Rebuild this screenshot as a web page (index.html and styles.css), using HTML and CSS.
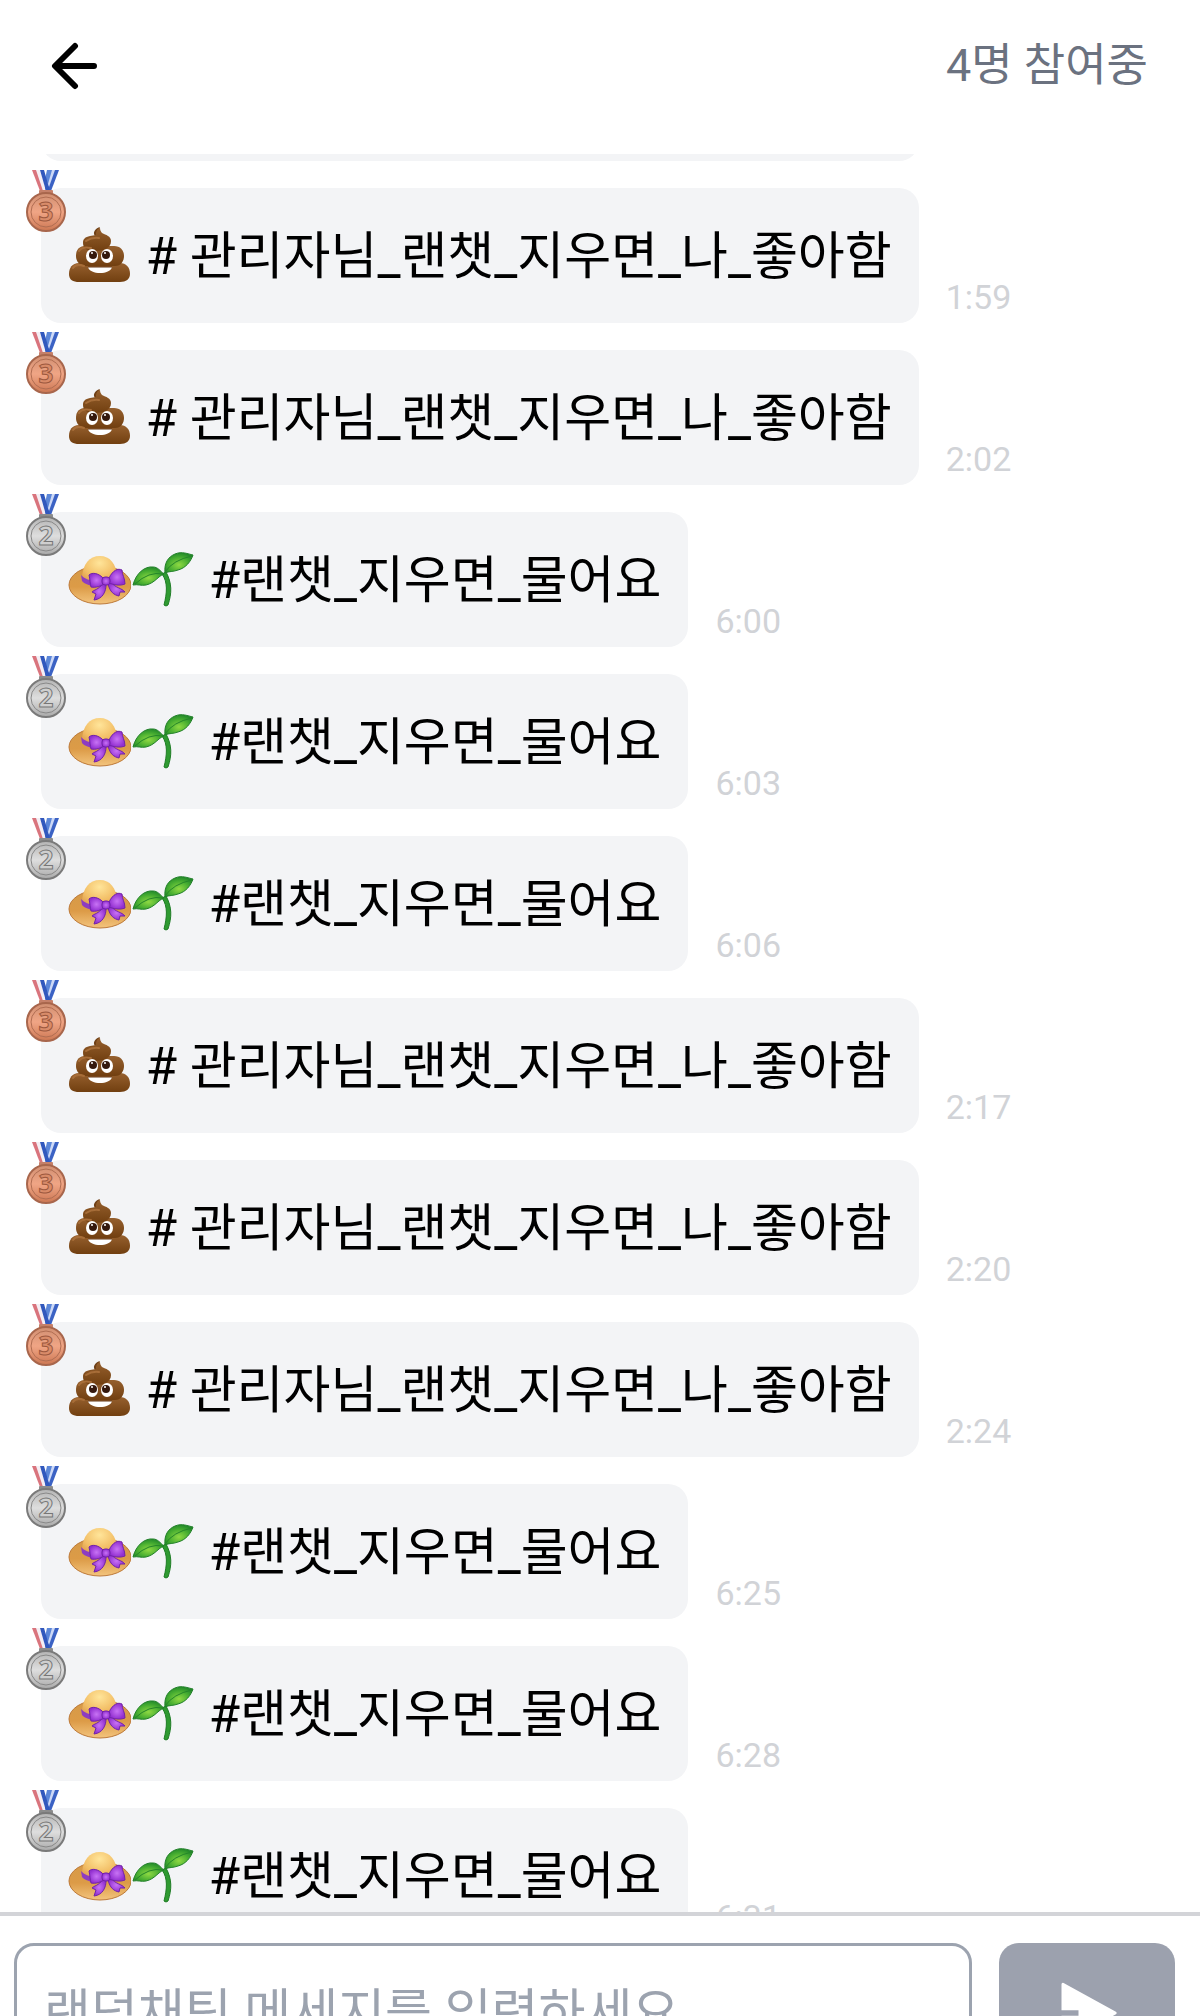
FILE: index.html
```html
<!DOCTYPE html>
<html lang="ko">
<head>
<meta charset="utf-8">
<meta name="viewport" content="width=device-width, initial-scale=1">
<title>랜덤채팅</title>
<link rel="stylesheet" href="styles.css">
</head>
<body>
<svg class="sprite" aria-hidden="true">
  <defs>
    <linearGradient id="bronze" x1="0" y1="0" x2="0" y2="1"><stop offset="0" stop-color="#d08f72"/><stop offset=".5" stop-color="#f0a585"/><stop offset="1" stop-color="#cc7753"/></linearGradient>
    <linearGradient id="silver" x1="0" y1="0" x2="0" y2="1"><stop offset="0" stop-color="#b4b4b4"/><stop offset=".5" stop-color="#dedede"/><stop offset="1" stop-color="#a9a9a9"/></linearGradient>
    <linearGradient id="brown" x1="0" y1="0" x2="0" y2="1"><stop offset="0" stop-color="#96602e"/><stop offset="1" stop-color="#713f10"/></linearGradient>
    <radialGradient id="straw" cx=".5" cy=".25" r=".8"><stop offset="0" stop-color="#ffe59a"/><stop offset=".6" stop-color="#f2bd64"/><stop offset="1" stop-color="#d8934a"/></radialGradient>
    <linearGradient id="brim" x1="0" y1="0" x2="0" y2="1"><stop offset="0" stop-color="#d59a48"/><stop offset=".55" stop-color="#dc9b47"/><stop offset="1" stop-color="#f3c47d"/></linearGradient>
    <radialGradient id="leaf" cx=".5" cy=".6" r=".6"><stop offset="0" stop-color="#8ed943"/><stop offset=".6" stop-color="#48ae31"/><stop offset="1" stop-color="#238a2a"/></radialGradient>
    <radialGradient id="bow"><stop offset="0" stop-color="#c873f5"/><stop offset="1" stop-color="#922fd0"/></radialGradient>
  </defs>
  <symbol id="ribbon" viewBox="0 0 40 63">
    <path d="M33 0L25 21H18L25 0Z" fill="#3b62c4"/>
    <path d="M29 0L23 17 20 13 25 0Z" fill="#cdd9f7"/>
    <path d="M26 0L22 14 19 9 21 0Z" fill="#5b86d8"/>
    <path d="M6 0L14 21H19L11 0Z" fill="#d9747d"/>
    <path d="M10 0L17 21H20L14 0Z" fill="#f4eef4"/>
    <path d="M14 0L20 21H24L18 0Z" fill="#3158bd"/>
  </symbol>
  <symbol id="medal-3" viewBox="0 0 40 63">
    <use href="#ribbon" width="40" height="63"/>
    <rect x="13" y="20" width="14" height="4" rx="1" fill="#c58069"/>
    <circle cx="20" cy="42" r="19" fill="url(#bronze)" stroke="#a8664c" stroke-width="2"/>
    <circle cx="20" cy="42" r="15" fill="none" stroke="#b06d52"/>
    <text class="medal-digit bronze" x="20" y="51">3</text>
  </symbol>
  <symbol id="medal-2" viewBox="0 0 40 63">
    <use href="#ribbon" width="40" height="63"/>
    <rect x="13" y="20" width="14" height="4" rx="1" fill="#8c8c8c"/>
    <circle cx="20" cy="42" r="19" fill="url(#silver)" stroke="#7a7a7a" stroke-width="2"/>
    <circle cx="20" cy="42" r="15" fill="none" stroke="#888"/>
    <text class="medal-digit silver" x="20" y="51">2</text>
  </symbol>
  <symbol id="poop" viewBox="0 0 63 63">
    <path d="M27 12C24 8 28 4 32 3C30 6 33 7 33 10Z" fill="#6f4017"/>
    <path d="M11 39C4 39 1 44 1 50C1 56 5 58 11 58H52C58 58 62 55 62 50C62 43 58 39 52 39Z" fill="url(#brown)"/>
    <path d="M16 22C9 23 8 28 8 32C8 38 12 42 18 42H47C53 42 56 37 56 32C56 26 52 22 46 22Z" fill="url(#brown)"/>
    <path d="M22 12C17 13 15 15 15 19C15 25 20 27 27 27C36 27 43 24 43 17C43 12 38 11 34 9C33 8 32 6 32 4C28 5 28 9 28 11Z" fill="url(#brown)"/>
    <path d="M11 27Q14 22 23 24M5 44Q8 39 16 42M18 17Q24 13 31 14" fill="none" stroke="#a76d38" stroke-width="2" stroke-linecap="round"/>
    <ellipse cx="24" cy="32" rx="6" ry="7" fill="#fff"/><ellipse cx="39" cy="32" rx="6" ry="7" fill="#fff"/>
    <circle cx="25" cy="31" r="4" fill="#35190d"/><circle cx="38" cy="31" r="4" fill="#35190d"/>
    <circle cx="24" cy="29" r="1" fill="#fff"/><circle cx="37" cy="29" r="1" fill="#fff"/>
    <path d="M20 43H44C42 51 22 51 20 43Z" fill="#fff"/><path d="M20 43H44" stroke="#633615" stroke-width="1"/>
  </symbol>
  <symbol id="hat" viewBox="0 0 63 63">
    <ellipse cx="32" cy="37" rx="31" ry="19" fill="url(#brim)" stroke="#bd7938"/>
    <path d="M14 29C15 16 21 8 32 8C42 8 48 16 49 27C43 39 19 39 14 29Z" fill="url(#straw)"/>
    <path d="M13 27C20 35 34 35 49 25V32C38 40 20 40 14 33Z" fill="#8e3cc1"/>
    <g fill="url(#bow)" stroke="#7123a8">
      <path d="M35 35C31 42 25 42 24 44L28 46 26 52C35 51 38 43 38 37Z"/>
      <path d="M40 36C42 44 46 47 51 48L52 44 57 44C54 40 47 40 43 34Z"/>
      <path d="M36 31C31 25 24 24 21 27C22 31 22 36 23 39C28 40 33 38 36 36Z"/>
      <path d="M41 30C45 22 50 20 54 22C54 27 57 30 57 36C52 38 46 37 41 35Z"/>
      <rect x="34" y="29" width="8" height="8" rx="3"/>
    </g>
  </symbol>
  <symbol id="sprout" viewBox="0 0 63 63">
    <path d="M31 26C37 34 36 45 33 57Q35 59 37 57C41 45 41 35 35 24Z" fill="#2f9a31" stroke="#1f7d26"/>
    <path d="M2 37C5 25 14 18 22 19C27 19 29 23 33 26C27 28 24 35 15 37C10 38 7 36 2 37Z" fill="url(#leaf)" stroke="#218029"/>
    <path d="M34 25C33 15 37 9 44 6C51 3 57 6 62 7C60 13 55 20 47 22C42 24 38 23 34 25Z" fill="url(#leaf)" stroke="#218029"/>
    <path d="M4 36Q18 23 32 26M34 24Q42 12 61 8" fill="none" stroke="#25862a"/>
  </symbol>
</svg>

<div class="app">
  <header class="topbar">
    <button class="back" type="button" aria-label="뒤로">
      <svg width="48" height="48" viewBox="0 0 48 48" fill="none" stroke="#000" stroke-width="6" stroke-linecap="round" stroke-linejoin="round"><path d="M25 4L5 24L25 44M6 24H44"/></svg>
    </button>
    <p class="members">4명 참여중</p>
  </header>

  <main class="chat">
    <ol class="messages">
      <li class="message"><div class="bubble"><svg class="medal"><use href="#medal-3"/></svg><svg class="emoji"><use href="#poop"/></svg><span class="text"> # 관리자님_랜챗_지우면_나_좋아함</span></div></li>
      <li class="message"><div class="bubble"><svg class="medal"><use href="#medal-3"/></svg><svg class="emoji"><use href="#poop"/></svg><span class="text"> # 관리자님_랜챗_지우면_나_좋아함</span></div><time>1:59</time></li>
      <li class="message"><div class="bubble"><svg class="medal"><use href="#medal-3"/></svg><svg class="emoji"><use href="#poop"/></svg><span class="text"> # 관리자님_랜챗_지우면_나_좋아함</span></div><time>2:02</time></li>
      <li class="message"><div class="bubble"><svg class="medal"><use href="#medal-2"/></svg><svg class="emoji"><use href="#hat"/></svg><svg class="emoji"><use href="#sprout"/></svg><span class="text"> #랜챗_지우면_물어요</span></div><time>6:00</time></li>
      <li class="message"><div class="bubble"><svg class="medal"><use href="#medal-2"/></svg><svg class="emoji"><use href="#hat"/></svg><svg class="emoji"><use href="#sprout"/></svg><span class="text"> #랜챗_지우면_물어요</span></div><time>6:03</time></li>
      <li class="message"><div class="bubble"><svg class="medal"><use href="#medal-2"/></svg><svg class="emoji"><use href="#hat"/></svg><svg class="emoji"><use href="#sprout"/></svg><span class="text"> #랜챗_지우면_물어요</span></div><time>6:06</time></li>
      <li class="message"><div class="bubble"><svg class="medal"><use href="#medal-3"/></svg><svg class="emoji"><use href="#poop"/></svg><span class="text"> # 관리자님_랜챗_지우면_나_좋아함</span></div><time>2:17</time></li>
      <li class="message"><div class="bubble"><svg class="medal"><use href="#medal-3"/></svg><svg class="emoji"><use href="#poop"/></svg><span class="text"> # 관리자님_랜챗_지우면_나_좋아함</span></div><time>2:20</time></li>
      <li class="message"><div class="bubble"><svg class="medal"><use href="#medal-3"/></svg><svg class="emoji"><use href="#poop"/></svg><span class="text"> # 관리자님_랜챗_지우면_나_좋아함</span></div><time>2:24</time></li>
      <li class="message"><div class="bubble"><svg class="medal"><use href="#medal-2"/></svg><svg class="emoji"><use href="#hat"/></svg><svg class="emoji"><use href="#sprout"/></svg><span class="text"> #랜챗_지우면_물어요</span></div><time>6:25</time></li>
      <li class="message"><div class="bubble"><svg class="medal"><use href="#medal-2"/></svg><svg class="emoji"><use href="#hat"/></svg><svg class="emoji"><use href="#sprout"/></svg><span class="text"> #랜챗_지우면_물어요</span></div><time>6:28</time></li>
      <li class="message"><div class="bubble"><svg class="medal"><use href="#medal-2"/></svg><svg class="emoji"><use href="#hat"/></svg><svg class="emoji"><use href="#sprout"/></svg><span class="text"> #랜챗_지우면_물어요</span></div><time>6:31</time></li>
    </ol>
  </main>

  <form class="composer">
    <input class="entry" type="text" aria-label="메세지" placeholder="랜덤채팅 메세지를 입력하세요">
    <button class="send" type="button" aria-label="보내기">
      <svg width="68" height="68" viewBox="0 0 24 24" fill="#fff"><path d="M3 13h6v-2H3V1.846a.5.5 0 0 1 .741-.438l18.462 10.154a.5.5 0 0 1 0 .876L3.741 22.592A.5.5 0 0 1 3 22.154V13z"/></svg>
    </button>
  </form>
</div>
</body>
</html>
```
FILE: styles.css
```css
* { box-sizing: border-box; }

body {
  margin: 0;
  background: #fff;
  color: #000;
  font-family: Roboto, "Noto Sans CJK KR", sans-serif;
}

.sprite { position: absolute; width: 0; height: 0; }

.app {
  display: flex;
  flex-direction: column;
  height: 100vh;
  overflow: hidden;
}

.topbar {
  flex: none;
  display: flex;
  align-items: center;
  justify-content: space-between;
  height: 132px;
  margin-bottom: 22px;
  padding: 0 52px 0 50px;
}

.back {
  display: flex;
  padding: 0;
  border: 0;
  background: none;
}

.members {
  margin: 0;
  color: #6b7280;
  font-size: 45px;
  line-height: 64px;
}

.chat {
  flex: 1;
  min-height: 0;
  overflow: hidden;
}

.messages {
  display: flex;
  flex-direction: column;
  gap: 27px;
  margin: -128px 0 0;
  padding: 0 41px;
  list-style: none;
}

.message {
  display: flex;
  align-items: flex-end;
  gap: 27px;
}

.bubble {
  position: relative;
  display: flex;
  align-items: center;
  height: 135px;
  padding: 0 27px;
  border-radius: 20px;
  background: #f3f4f6;
}

.medal {
  position: absolute;
  top: -18px;
  left: -15px;
  width: 40px;
  height: 63px;
}

.medal-digit {
  font: 700 26px "Noto Sans", sans-serif;
  text-anchor: middle;
}

.bronze { fill: #d98b69; stroke: #9c583e; }
.silver { fill: #cfcfcf; stroke: #777; }

.emoji {
  flex: none;
  width: 63px;
  height: 63px;
}

.text {
  padding: 2px 0 0 2px;
  font-size: 51px;
  line-height: 72px;
  white-space: pre;
}

time {
  padding-bottom: 6px;
  color: #d1d3d7;
  font-size: 34px;
  line-height: 40px;
}

.composer {
  flex: none;
  display: flex;
  align-items: flex-start;
  gap: 27px;
  height: 104px;
  padding: 27px 25px 0 14px;
  border-top: 4px solid #d3d4d8;
  background: #fff;
}

.entry {
  flex: 1;
  min-width: 0;
  height: 140px;
  padding: 0 27px;
  border: 3px solid #9ca3af;
  border-radius: 20px;
  background: #fff;
  font: inherit;
  font-size: 51px;
}

.entry::placeholder { color: #9ca3af; }

.send {
  flex: none;
  display: flex;
  align-items: center;
  justify-content: center;
  width: 176px;
  height: 140px;
  padding: 0;
  border: 0;
  border-radius: 20px;
  background: #9ca1ae;
}
```
